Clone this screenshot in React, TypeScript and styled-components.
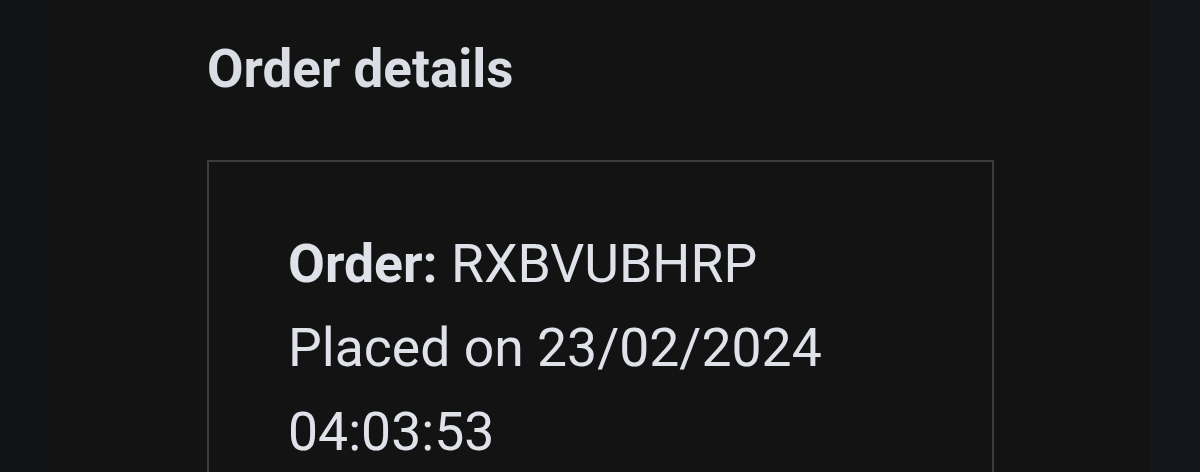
import React from "react";
import styled, { createGlobalStyle } from "styled-components";

const Global = createGlobalStyle`
  html, body { margin: 0; padding: 0; background: #131313; }
  body { font-family: Roboto, "Noto Sans", sans-serif; }
`;

const Page = styled.div`
  display: flex;
  width: 1200px;
  height: 472px;
  overflow: hidden;
`;

const SideStrip = styled.div<{ $side: "left" | "right" }>`
  width: 50px;
  flex: none;
  background: ${(p) => (p.$side === "left" ? "#111216" : "#15161b")};
`;

const Main = styled.main`
  flex: 1;
  background: #131313;
  padding: 38px 0 0 157px;
  box-sizing: border-box;
`;

const Heading = styled.h1`
  margin: 0 0 58px;
  font-size: 53px;
  line-height: 1.2;
  font-weight: 700;
  color: #dadde4;
`;

const Card = styled.section`
  width: 787px;
  box-sizing: border-box;
  border: 2px solid #3c3c3c;
  padding: 60px 79px 40px;
`;

const Line = styled.p`
  margin: 0;
  font-size: 53.5px;
  line-height: 84px;
  color: #dfe2e9;
`;

const Label = styled.strong`
  font-weight: 700;
`;

export default function App() {
  return (
    <>
      <Global />
      <Page>
        <SideStrip $side="left" />
        <Main>
          <Heading>Order details</Heading>
          <Card>
            <Line>
              <Label>Order:</Label> RXBVUBHRP
            </Line>
            <Line>Placed on 23/02/2024</Line>
            <Line>04:03:53</Line>
          </Card>
        </Main>
        <SideStrip $side="right" />
      </Page>
    </>
  );
}
